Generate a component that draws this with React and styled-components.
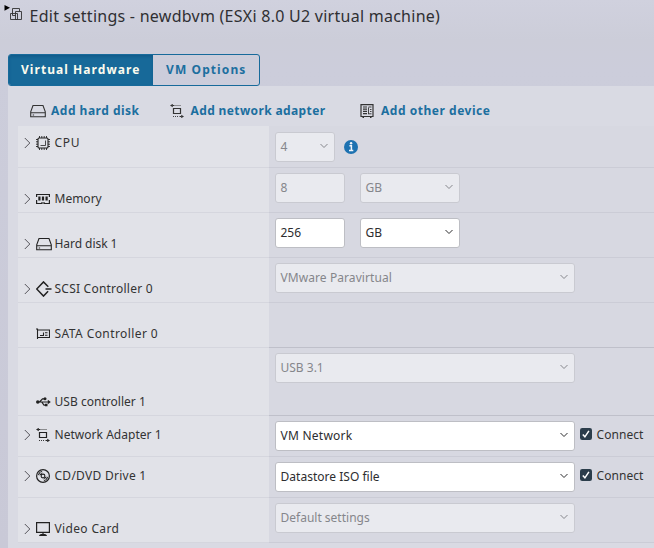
import React from "react";
import styled, { createGlobalStyle } from "styled-components";

const Global = createGlobalStyle`
  * { box-sizing: border-box; }
  body {
    margin: 0; width: 654px; height: 548px; overflow: hidden;
    font-family: "Noto Sans", "Open Sans", sans-serif; font-size: 12px; color: #333;
    background: linear-gradient(#d0d1de 0, #cccdd9 40px, #cccddb 70px, #c9c9d7 100%);
  }
`;

const Page = styled.main`
  width: 654px; height: 548px; overflow: hidden;
`;
const Header = styled.header`
  display: flex; align-items: center; height: 32px; padding-left: 4px;
`;
const Title = styled.h1`
  margin: 0 0 0 6.5px; font-size: 16px; font-weight: 400; line-height: 20px;
  letter-spacing: ${(p) => p.$ls}px; white-space: nowrap; color: #2f2f33;
`;
const Tabs = styled.nav`
  display: flex; width: 252px; height: 32px; margin: 22px 0 0 8px;
  border: 1px solid #176a9b; border-radius: 3px; overflow: hidden;
`;
const Tab = styled.button`
  width: ${(p) => p.$w}px; height: 30px; padding: 0 0 0 ${(p) => p.$pl}px;
  border: 0; text-align: left; white-space: nowrap;
  font: 700 12px/30px "Noto Sans", sans-serif; letter-spacing: ${(p) => p.$ls}px;
  background: ${(p) => (p.$active ? "#176999" : "transparent")};
  color: ${(p) => (p.$active ? "#fbfbee" : "#1c6f9f")};
  box-shadow: ${(p) => (p.$active ? "inset 0 2px 3px #105b8b" : "none")};
`;
const Panel = styled.section`
  height: 462px; margin-left: 8px; background: #d9dae3;
`;
const Actions = styled.div`
  display: flex; align-items: center; height: 40px; padding: 9px 0 0 22px;
`;
const Action = styled.button`
  display: flex; align-items: center; gap: ${(p) => p.$gap}px; width: ${(p) => p.$w}px;
  padding: 0; border: 0; background: none; color: #1c6f9f; white-space: nowrap;
  font: 700 12px/16px "Noto Sans", sans-serif; letter-spacing: ${(p) => p.$ls}px;
  svg { flex: none; color: #333; }
`;
const Table = styled.div`
  margin-left: 10px;
`;
const Row = styled.div`
  display: grid; grid-template-columns: 251px 1fr; height: ${(p) => p.$h}px;
`;
const LabelCell = styled.div`
  display: flex; align-items: flex-end; padding: 0 0 ${(p) => p.$pb}px 6px;
  background: #e1e2e8; border-bottom: 1px solid #d5d6de;
`;
const Label = styled.div`
  display: grid; grid-template-columns: 12px 17px auto; align-items: center; height: 16px;
  color: #222;
`;
const Caption = styled.span`
  padding-left: 1.5px; line-height: 16px; white-space: nowrap; color: #333;
  letter-spacing: ${(p) => p.$ls}px;
`;
const FieldCell = styled.div`
  display: flex; align-items: flex-start; padding: ${(p) => p.$pt}px 0 0 6px;
  background: #d7d8e1; border-bottom: 1px solid ${(p) => (p.$dark ? "#bfc0ca" : "#cbccd6")};
`;
const Field = styled.div`
  display: flex; align-items: center; justify-content: space-between;
  width: ${(p) => p.$w}px; height: 30px; margin-right: ${(p) => p.$mr || 0}px; padding: 0 6.5px 2px 4.5px;
  border: 1px solid ${(p) => (p.$off ? "#c9cad1" : "#bdbec4")}; border-radius: 3px;
  background: ${(p) => (p.$off ? "#e9eaef" : "#fff")};
  color: ${(p) => (p.$off ? "#85868b" : "#2d2d2f")};
`;
const Value = styled.span`
  white-space: nowrap; letter-spacing: ${(p) => p.$ls || 0}px;
`;
const Check = styled.label`
  display: flex; align-items: center; gap: 4.5px; height: 26px; letter-spacing: ${(p) => p.$ls}px;
`;
const Info = styled.span`
  display: flex; align-items: center; height: 30px;
`;

function Svg({ w = 16, h = 16, children, sw = 1 }) {
  return (
    <svg width={w} height={h} viewBox={`0 0 ${w} ${h}`} fill="none" stroke="currentColor" strokeWidth={sw}>
      {children}
    </svg>
  );
}

const icons = {
  vm: (
    <Svg w={19} h={24}>
      <path d="M.5 1 6 3.8.5 6.8Z" fill="#000" stroke="none" />
      <path d="M8.5 8V4.5h7v3M11.5 7.5h6v8h-6zM6.5 9.5h7v6h-7zM8.5 7.5v4h3" strokeWidth=".9" />
    </Svg>
  ),
  disk: (
    <Svg w={16} h={14} sw={1.1}>
      <path d="M3 1.5h10l2.3 6.3v5H.7v-5zM.7 8.7h14.6M2.7 11h1.4" />
    </Svg>
  ),
  cpu: (
    <Svg w={14} h={14}>
      <rect x="2" y="2" width="10" height="10" rx="1" strokeWidth="1.1" />
      <path d="M4.5 9.5h5v-5" strokeWidth=".8" />
      <path d="M3.5 0v2M5.8 0v2M8.2 0v2M10.5 0v2M3.5 12v2M5.8 12v2M8.2 12v2M10.5 12v2M0 3.5h2M0 5.8h2M0 8.2h2M0 10.5h2M12 3.5h2M12 5.8h2M12 8.2h2M12 10.5h2" strokeWidth=".9" />
    </Svg>
  ),
  memory: (
    <Svg w={14} h={14}>
      <path d="M.6 5V2.5h12.8V5M.6 8v3.5H6M8 11.5h5.4V8M6 12V10M8 12V10" strokeWidth="1.2" />
      <path d="M3.4 4.5v4M7 4.5v4M10.6 4.5v4" strokeWidth="2.2" />
    </Svg>
  ),
  scsi: (
    <Svg w={16} h={16} sw={1.5}>
      <path d="m12.3 5.7-4.8-4.8L.7 8l6.8 7.1 4.6-4.8M9.5 8h6" />
    </Svg>
  ),
  sata: (
    <Svg w={14} h={14} sw={1.1}>
      <path d="M0 2h1.5v10M1.5 3h12v7.5h-12M4 8.5h3.5v-3M9 5.8h2.5M9 8.3h2.5" />
    </Svg>
  ),
  usb: (
    <Svg w={15} h={14} sw={1.2}>
      <path d="M1 7h12M3.5 7 6.5 3.8h3M5.7 7 8 10.2h2" />
      <circle cx="1.8" cy="7" r="1.8" fill="currentColor" stroke="none" />
      <circle cx="9" cy="3.8" r="1.5" fill="currentColor" stroke="none" />
      <path d="m11.8 4.8 3 2.2-3 2.2zM9 8.8h2.5v2.5H9z" fill="currentColor" stroke="none" />
    </Svg>
  ),
  network: (
    <Svg w={14} h={14}>
      <path d="M3.5 4.5h7v5h-7z" strokeWidth="1.2" />
      <path d="M0 1.5 2.8-.2v3.4zM14 12.5l-2.8-1.7v3.4z" fill="currentColor" stroke="none" />
      <path d="M2.5 1.5h2M9.5 12.5h2" />
      <path d="M5.5 1.5H11M3 12.5h6" strokeDasharray="1 1" strokeWidth=".9" />
    </Svg>
  ),
  disc: (
    <Svg w={14} h={14}>
      <circle cx="7" cy="7" r="6.4" strokeWidth="1.2" />
      <circle cx="7" cy="7" r="1.9" strokeWidth="1.1" />
      <path d="M2.2 6.2A5 5 0 0 1 6.2 2.2M3.9 6.3a3.3 3.3 0 0 1 2.4-2.4M11.8 7.8a5 5 0 0 1-4 4M10.1 7.7a3.3 3.3 0 0 1-2.4 2.4M3 4.4 5.3 6M11 9.6 8.7 8" strokeWidth=".9" />
    </Svg>
  ),
  video: (
    <Svg w={14} h={14}>
      <path d="M.6.6h12.8v9.8H.6zM7 11v2" strokeWidth="1.2" />
      <path d="M3 14c.3-1.5 1.5-2 3-2h2c1.5 0 2.7.5 3 2z" fill="currentColor" stroke="none" />
    </Svg>
  ),
  other: (
    <Svg w={14} h={14}>
      <path d="M1 .7h12v11.8H1zM2.5 13.5H4M10 13.5h1.5" strokeWidth="1.2" />
      <path d="M3 3h4M3 5.2h4M3 7.4h4M3 9.6h4" strokeWidth="1.2" />
      <path d="M8.5 10.2V3.5M8.5 3h3M10 5.5h1.5M10 7.5h1.5M8.5 9.8h3" strokeWidth=".9" />
    </Svg>
  ),
};

const Chevron = () => (
  <Svg w={7} h={12}><path d="m.8 1 5 5-5 5" stroke="#55565b" /></Svg>
);
const Caret = () => (
  <Svg w={8} h={6}><path d="m.5 1 3.5 3.5L7.5 1" /></Svg>
);
const Checkbox = () => (
  <svg width="12" height="12" viewBox="0 0 12 12">
    <rect width="12" height="12" rx="2.2" fill="#2b3d4b" />
    <path d="m2.8 6.5 2.1 2.3 4-6" fill="none" stroke="#fff" strokeWidth="1.5" />
  </svg>
);
const InfoIcon = () => (
  <svg width="14" height="14" viewBox="0 0 14 14">
    <circle cx="7" cy="7" r="7" fill="#1d72b1" />
    <path d="M5.4 5.8h2v4.5M5 10.5h4.3" stroke="#f2f5fa" strokeWidth="1.5" fill="none" />
    <circle cx="7.1" cy="3.3" r="1.2" fill="#f2f5fa" />
  </svg>
);

const rows = [
  { h: 42, pb: 16, pt: 6, icon: "cpu", label: "CPU", ls: 0.65, fields: [{ w: 60, off: 1, t: "4", caret: 1, mr: 9 }], info: 1 },
  { h: 45, pb: 5, icon: "memory", label: "Memory", ls: 0, fields: [{ w: 70, off: 1, t: "8", mr: 15 }, { w: 100, off: 1, t: "GB", caret: 1 }] },
  { h: 45, pb: 5, icon: "disk", label: "Hard disk 1", ls: -0.05, fields: [{ w: 70, t: "256", mr: 15 }, { w: 100, t: "GB", caret: 1 }] },
  { h: 45, pb: 5, icon: "scsi", label: "SCSI Controller 0", ls: 0.23, fields: [{ w: 300, off: 1, t: "VMware Paravirtual", caret: 1, ls: 0.08 }] },
  { h: 45, pb: 5, icon: "sata", label: "SATA Controller 0", ls: 0.42, leaf: 1, dark: 1, fields: [] },
  { h: 68, pb: 5, icon: "usb", label: "USB controller 1", ls: 0.03, leaf: 1, dark: 1, fields: [{ w: 300, off: 1, t: "USB 3.1", caret: 1 }] },
  { h: 41, pb: 13, icon: "network", label: "Network Adapter 1", ls: 0.03, fields: [{ w: 300, t: "VM Network", caret: 1, mr: 5, ls: 0.25 }], check: 1 },
  { h: 41, pb: 13, icon: "disc", label: "CD/DVD Drive 1", ls: 0.27, fields: [{ w: 300, t: "Datastore ISO file", caret: 1, mr: 5, ls: 0.02 }], check: 1 },
  { h: 45, pb: 5, icon: "video", label: "Video Card", ls: 0.35, fields: [{ w: 300, off: 1, t: "Default settings", caret: 1 }] },
];

export default function App() {
  return (
    <Page>
      <Global />
      <Header>
        {icons.vm}
        <Title $ls={0.26}>Edit settings - newdbvm (ESXi 8.0 U2 virtual machine)</Title>
      </Header>
      <Tabs>
        <Tab $active $w={144} $pl={12} $ls={1.06}>Virtual Hardware</Tab>
        <Tab $w={106} $pl={13} $ls={1.1}>VM Options</Tab>
      </Tabs>
      <Panel>
        <Actions>
          <Action $gap={5} $w={140} $ls={0.5}>{icons.disk}Add hard disk</Action>
          <Action $gap={6.5} $w={190} $ls={0.38}>{icons.network}Add network adapter</Action>
          <Action $gap={7} $w={130} $ls={0.53}>{icons.other}Add other device</Action>
        </Actions>
        <Table>
          {rows.map((r) => (
            <Row key={r.label} $h={r.h}>
              <LabelCell $pb={r.pb}>
                <Label>
                  {r.leaf ? <span /> : <Chevron />}
                  {icons[r.icon]}
                  <Caption $ls={r.ls}>{r.label}</Caption>
                </Label>
              </LabelCell>
              <FieldCell $pt={r.pt || 5} $dark={r.dark}>
                {r.fields.map((f) => (
                  <Field key={f.t} $w={f.w} $off={f.off} $mr={f.mr}>
                    <Value $ls={f.ls}>{f.t}</Value>
                    {f.caret && <Caret />}
                  </Field>
                ))}
                {r.info && <Info><InfoIcon /></Info>}
                {r.check && <Check $ls={0.05}><Checkbox />Connect</Check>}
              </FieldCell>
            </Row>
          ))}
        </Table>
      </Panel>
    </Page>
  );
}
